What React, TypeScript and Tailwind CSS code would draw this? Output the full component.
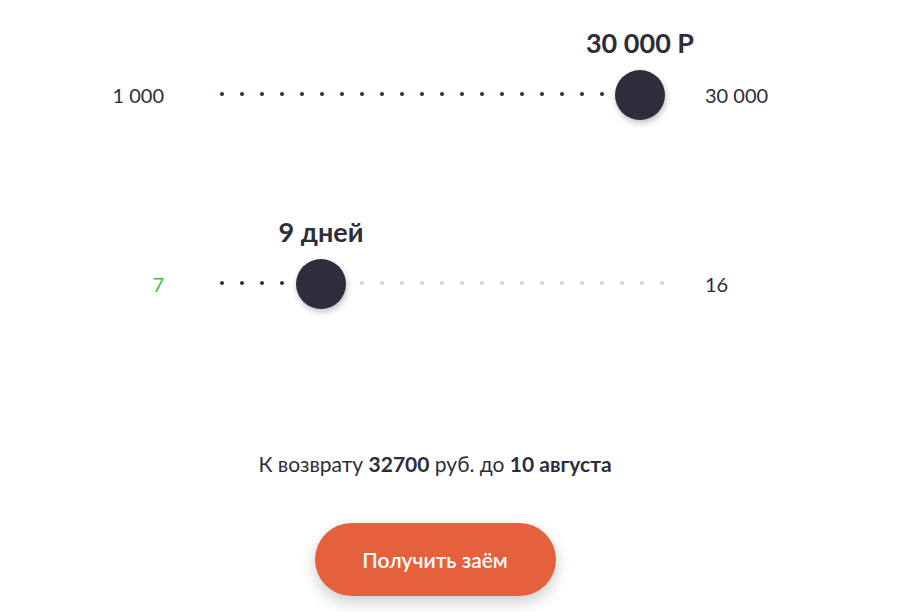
import React from "react";

const DOTS = 23;

function Slider({
  min,
  max,
  label,
  pos,
  activeCount,
  minClass,
}: {
  min: string;
  max: string;
  label: string;
  pos: number;
  activeCount: number;
  minClass: string;
}) {
  return (
    <div className="flex items-center h-[50px]">
      <div className={`w-[164px] text-right text-[20px] leading-none ${minClass}`}>{min}</div>
      <div className="relative ml-[56px] w-[444px] h-[50px] flex items-center">
        <div className="w-full flex justify-between -mt-[3px]">
          {Array.from({ length: DOTS }).map((_, i) => (
            <span
              key={i}
              className={`block w-[4px] h-[4px] rounded-full ${i < activeCount ? "bg-[#2d2d3b]" : "bg-[#d4d4d4]"}`}
            />
          ))}
        </div>
        <div
          className="absolute top-0 w-[50px] h-[50px] rounded-full bg-[#2d2d3c] shadow-[1px_3px_6px_rgba(0,0,0,0.25)]"
          style={{ left: pos }}
        >
          <div className="absolute left-1/2 -translate-x-1/2 -top-[42px] whitespace-nowrap text-[27px] font-bold text-[#2d2d3b] leading-[30px]">
            {label}
          </div>
        </div>
      </div>
      <div className="ml-[41px] text-[20px] leading-none text-[#2d2d3b]">{max}</div>
    </div>
  );
}

export default function App() {
  return (
    <div
      className="w-[900px] h-[612px] bg-white overflow-hidden flex flex-col text-[#2d2d3b]"
      style={{ fontFamily: "Lato, 'Noto Sans', sans-serif" }}
    >
      <div className="pt-[70px]">
        <Slider min="1 000" max="30 000" label="30 000 Р" pos={395} activeCount={20} minClass="text-[#2d2d3b]" />
      </div>
      <div className="pt-[139px]">
        <Slider min="7" max="16" label="9 дней" pos={76} activeCount={4} minClass="text-[#33cc33]" />
      </div>
      <div className="mt-[143px] flex flex-col items-center w-[870px]">
        <p className="text-[21px] leading-[24px]">
          К возврату <b className="font-bold">32700</b> руб. до <b className="font-bold">10 августа</b>
        </p>
        <button className="mt-[47px] w-[241px] h-[73px] rounded-full bg-[#e5613e] text-white text-[21px] font-semibold shadow-[0_6px_16px_rgba(0,0,0,0.2)]">
          Получить заём
        </button>
      </div>
    </div>
  );
}
